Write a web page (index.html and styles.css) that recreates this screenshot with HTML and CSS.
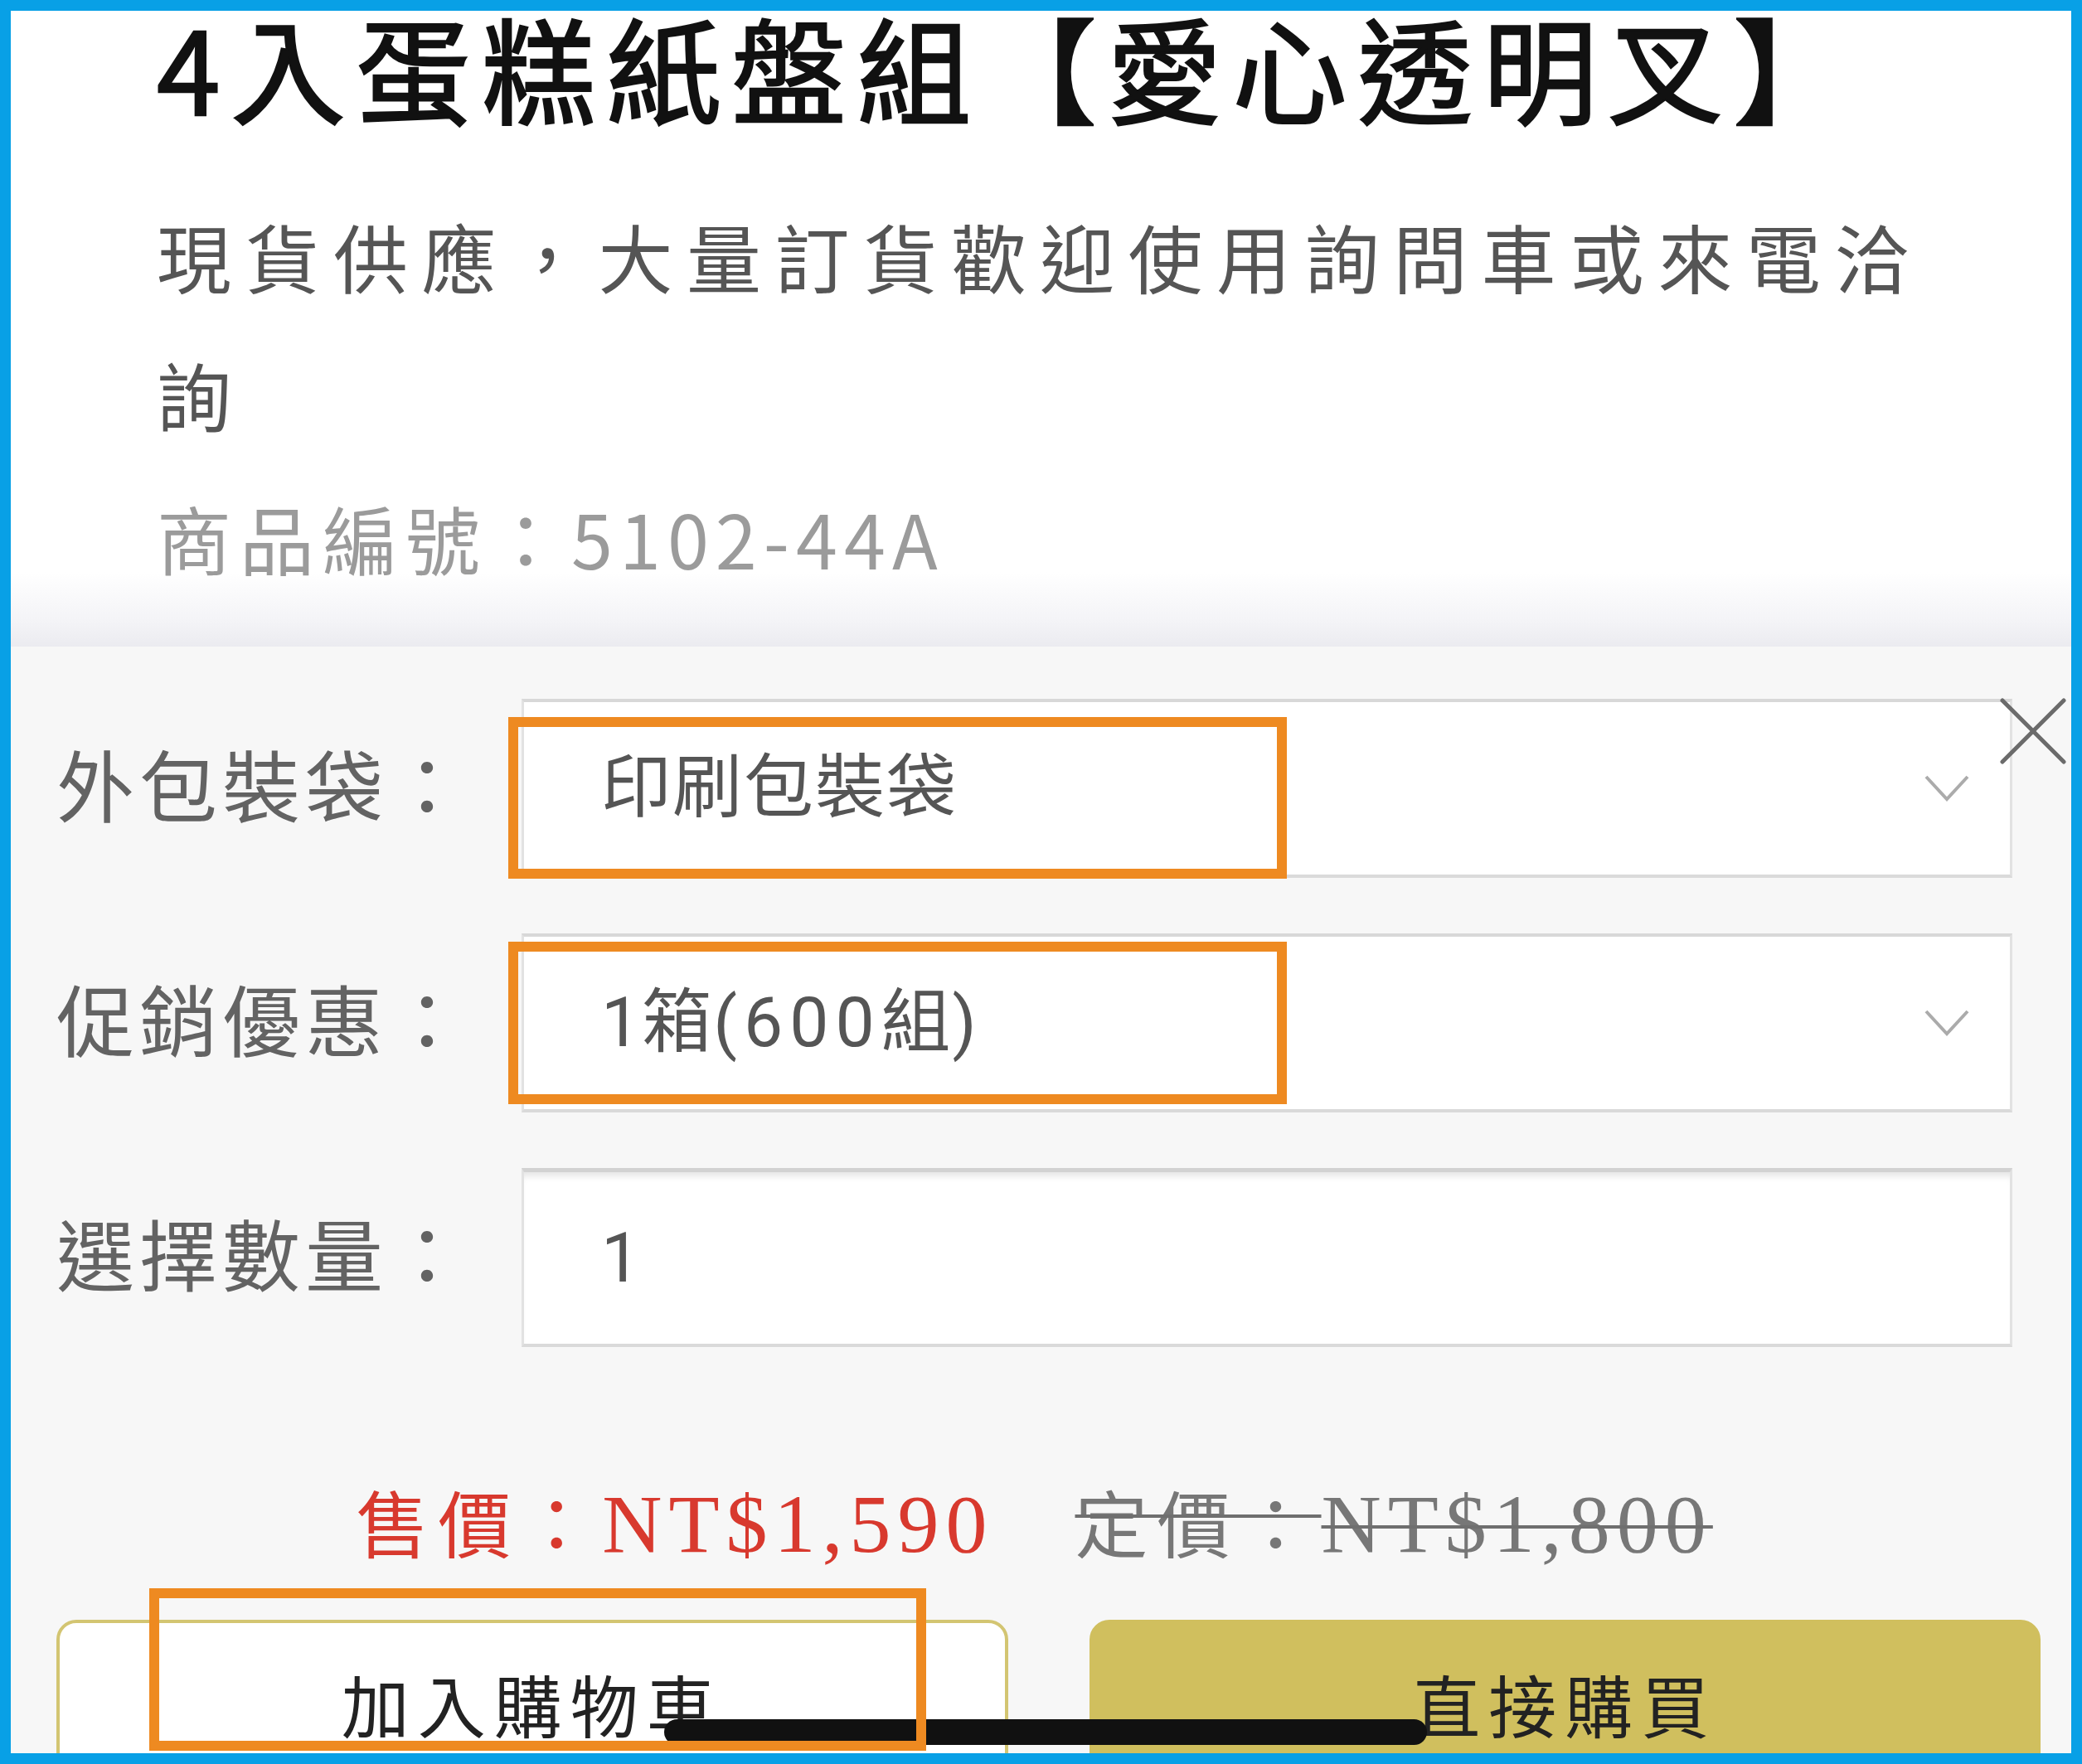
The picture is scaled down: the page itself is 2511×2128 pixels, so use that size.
FILE: index.html
```html
<!DOCTYPE html>
<html lang="zh-Hant">
<head>
<meta charset="utf-8">
<title>4入蛋糕紙盤組【愛心透明叉】</title>
<link rel="stylesheet" href="styles.css">
</head>
<body>
<div class="frame">
  <section class="product-head">
    <h1 class="title">4入蛋糕紙盤組【愛心透明叉】</h1>
    <p class="desc">現貨供應，大量訂貨歡迎使用詢問車或來電洽詢</p>
    <p class="sku">商品編號：<span class="code">5102-44A</span></p>
  </section>

  <section class="sheet">
    <button class="close" aria-label="關閉">
      <svg viewBox="0 0 80 80" width="80" height="80"><line x1="3" y1="3" x2="77" y2="77"/><line x1="77" y1="3" x2="3" y2="77"/></svg>
    </button>

    <div class="form">
      <div class="row">
        <span class="label">外包裝袋：</span>
        <div class="field select">
          <span class="value">印刷包裝袋</span>
          <svg class="chev" viewBox="0 0 56 34" width="56" height="34"><polyline points="3,3 28,30 53,3"/></svg>
        </div>
      </div>
      <div class="row">
        <span class="label">促銷優惠：</span>
        <div class="field select">
          <span class="value">1箱<span class="num">(600</span>組)</span>
          <svg class="chev" viewBox="0 0 56 34" width="56" height="34"><polyline points="3,3 28,30 53,3"/></svg>
        </div>
      </div>
      <div class="row">
        <span class="label">選擇數量：</span>
        <div class="field input">
          <span class="value">1</span>
        </div>
      </div>
    </div>

    <div class="price">
      <span class="sale"><span class="cjk">售價：</span>NT$1,590</span>
      <span class="list"><span class="cjk">定價：</span>NT$1,800</span>
    </div>

    <div class="actions">
      <button class="btn btn-cart">加入購物車</button>
      <button class="btn btn-buy">直接購買</button>
    </div>

    <div class="home-indicator"></div>
  </section>

  <div class="mark mark-1"></div>
  <div class="mark mark-2"></div>
  <div class="mark mark-3"></div>
</div>
</body>
</html>
```

FILE: styles.css
```css
* { box-sizing: border-box; }

html, body {
  margin: 0;
  padding: 0;
  background: #08a0e6;
}

body {
  font-family: "Noto Sans CJK TC", "Noto Sans CJK SC", sans-serif;
}

.frame {
  position: relative;
  width: 2511px;
  height: 2128px;
  border: 13px solid #08a0e6;
  overflow: hidden;
  display: flex;
  flex-direction: column;
  background: #f7f7f7;
}

/* ---------- product header ---------- */
.product-head {
  height: 767px;
  flex: none;
  padding: 0 150px 0 176px;
  background: linear-gradient(to bottom, #ffffff 0, #ffffff 677px, #f4f4f7 735px, #ebebf0 767px);
}

.title {
  margin: 0;
  padding-top: 2px;
  font-size: 138px;
  line-height: 128px;
  font-weight: 400;
  -webkit-text-stroke: 2.5px #111;
  letter-spacing: 13px;
  color: #111;
  white-space: nowrap;
}

.desc {
  margin: 82px 0 0;
  font-size: 90px;
  line-height: 167px;
  letter-spacing: 16.5px;
  color: #555;
}

.sku {
  margin: 6px 0 0;
  font-size: 90px;
  line-height: 167px;
  letter-spacing: 10px;
  color: #9b9b9b;
}

.sku .code { letter-spacing: 8px; }

/* ---------- bottom sheet ---------- */
.sheet {
  position: relative;
  flex: 1;
  min-height: 0;
  overflow: hidden;
  padding: 63px 71px 0 55px;
  background: #f7f7f7;
}

.close {
  position: absolute;
  top: 62px;
  left: 2399px;
  width: 80px;
  height: 80px;
  padding: 0;
  border: 0;
  background: transparent;
  z-index: 2;
}
.close svg { display: block; }
.close line {
  stroke: #6b6b6b;
  stroke-width: 5;
  stroke-linecap: round;
}

.form {
  display: flex;
  flex-direction: column;
  gap: 67px;
}

.row {
  display: grid;
  grid-template-columns: 561px 1fr;
  align-items: center;
}

.label {
  margin-bottom: 14px;
  font-size: 94px;
  line-height: 1;
  letter-spacing: 6px;
  color: #636363;
}

.field {
  height: 216px;
  display: flex;
  align-items: center;
  justify-content: space-between;
  padding: 0 48px 0 93px;
  background: #fff;
  border: 3px solid #e2e2e2;
  border-top: 4px solid #d8d8d8;
  border-bottom: 4px solid #dadada;
}

.field.input {
  border-top: 5px solid #d2d2d2;
  box-shadow: inset 0 10px 10px -6px rgba(0, 0, 0, 0.12);
}

.value {
  font-family: "Roboto", "Noto Sans CJK TC", sans-serif;
  font-size: 84px;
  line-height: 1;
  letter-spacing: 2px;
  color: #555;
}

.value .num {
  letter-spacing: 8px;
}

.chev polyline {
  fill: none;
  stroke: #ababab;
  stroke-width: 4;
}

/* ---------- price ---------- */
.price {
  margin-top: 149px;
  display: flex;
  justify-content: center;
  gap: 98px;
  font-family: "Liberation Serif", "Noto Sans CJK TC", serif;
  font-size: 100px;
  line-height: 120px;
  letter-spacing: 8px;
  white-space: nowrap;
}

.price .cjk {
  font-family: "Noto Sans CJK TC", sans-serif;
  font-size: 88px;
  letter-spacing: 11px;
}

.sale { color: #d8392e; }

.list {
  color: #777;
  text-decoration: line-through;
  text-decoration-thickness: 4px;
  text-decoration-color: #6f6f6f;
}

/* ---------- actions ---------- */
.actions {
  margin: 55px -34px 0 0;
  display: grid;
  grid-template-columns: 1fr 1fr;
  gap: 98px;
}

.btn {
  height: 200px;
  border-radius: 24px;
  font-family: "Noto Sans CJK TC", sans-serif;
  font-size: 82px;
  font-weight: 400;
  letter-spacing: 10px;
  color: #222;
  padding: 0;
}

.btn-cart {
  background: #fff;
  border: 4px solid #d3c572;
}

.btn-buy {
  background: #d0bf5e;
  border: 4px solid #d0bf5e;
}

.home-indicator {
  position: absolute;
  left: 788px;
  bottom: 10px;
  width: 920px;
  height: 31px;
  border-radius: 16px;
  background: #111;
  z-index: 3;
}

/* ---------- annotation marks ---------- */
.mark {
  position: absolute;
  border: 12px solid #ee8a21;
  z-index: 4;
}
.mark-1 { left: 600px; top: 852px; width: 939px; height: 195px; }
.mark-2 { left: 600px; top: 1123px; width: 939px; height: 196px; }
.mark-3 { left: 167px; top: 1903px; width: 937px; height: 196px; }
```
